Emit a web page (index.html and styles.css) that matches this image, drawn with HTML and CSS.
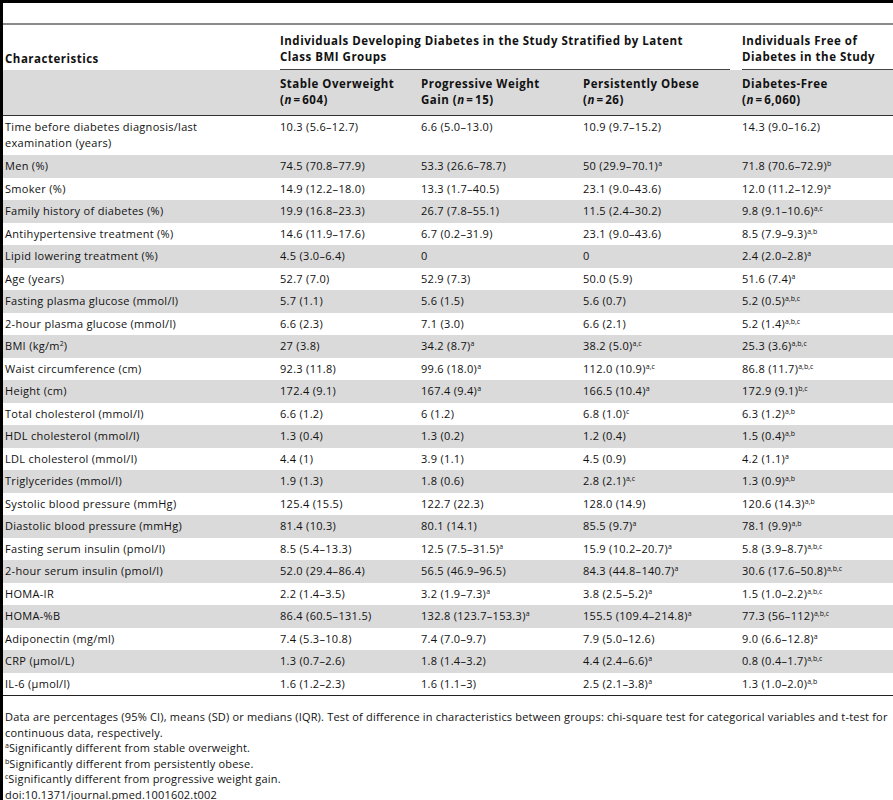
FILE: index.html
```html
<!DOCTYPE html>
<html lang="en">
<head>
<meta charset="utf-8">
<title>Table 2</title>
<link rel="stylesheet" href="styles.css">
</head>
<body>
<div class="page">
  <div class="top-rule"></div>
  <div class="caption-space"></div>
  <table class="data">
    <colgroup>
      <col class="c1"><col class="c2"><col class="c3"><col class="c4"><col class="c5">
    </colgroup>
    <thead>
      <tr class="group-row">
        <th class="char">Characteristics</th>
        <th class="group" colspan="3"><div class="group-inner">Individuals Developing Diabetes in the Study Stratified by Latent<br>Class BMI Groups</div></th>
        <th class="group last"><div class="group-inner">Individuals Free of<br>Diabetes in the Study</div></th>
      </tr>
      <tr class="sub-row">
        <th></th>
        <th>Stable Overweight<br>(<i>n</i>&#8202;=&#8202;604)</th>
        <th>Progressive Weight<br>Gain (<i>n</i>&#8202;=&#8202;15)</th>
        <th>Persistently Obese<br>(<i>n</i>&#8202;=&#8202;26)</th>
        <th>Diabetes-Free<br>(<i>n</i>&#8202;=&#8202;6,060)</th>
      </tr>
    </thead>
    <tbody>
      <tr class="first"><td>Time before diabetes diagnosis/last<br>examination (years)</td><td>10.3 (5.6–12.7)</td><td>6.6 (5.0–13.0)</td><td>10.9 (9.7–15.2)</td><td>14.3 (9.0–16.2)</td></tr>
      <tr class="alt"><td>Men (%)</td><td>74.5 (70.8–77.9)</td><td>53.3 (26.6–78.7)</td><td>50 (29.9–70.1)<sup>a</sup></td><td>71.8 (70.6–72.9)<sup>b</sup></td></tr>
      <tr><td>Smoker (%)</td><td>14.9 (12.2–18.0)</td><td>13.3 (1.7–40.5)</td><td>23.1 (9.0–43.6)</td><td>12.0 (11.2–12.9)<sup>a</sup></td></tr>
      <tr class="alt"><td>Family history of diabetes (%)</td><td>19.9 (16.8–23.3)</td><td>26.7 (7.8–55.1)</td><td>11.5 (2.4–30.2)</td><td>9.8 (9.1–10.6)<sup>a,c</sup></td></tr>
      <tr><td>Antihypertensive treatment (%)</td><td>14.6 (11.9–17.6)</td><td>6.7 (0.2–31.9)</td><td>23.1 (9.0–43.6)</td><td>8.5 (7.9–9.3)<sup>a,b</sup></td></tr>
      <tr class="alt"><td>Lipid lowering treatment (%)</td><td>4.5 (3.0–6.4)</td><td>0</td><td>0</td><td>2.4 (2.0–2.8)<sup>a</sup></td></tr>
      <tr><td>Age (years)</td><td>52.7 (7.0)</td><td>52.9 (7.3)</td><td>50.0 (5.9)</td><td>51.6 (7.4)<sup>a</sup></td></tr>
      <tr class="alt"><td>Fasting plasma glucose (mmol/l)</td><td>5.7 (1.1)</td><td>5.6 (1.5)</td><td>5.6 (0.7)</td><td>5.2 (0.5)<sup>a,b,c</sup></td></tr>
      <tr><td>2-hour plasma glucose (mmol/l)</td><td>6.6 (2.3)</td><td>7.1 (3.0)</td><td>6.6 (2.1)</td><td>5.2 (1.4)<sup>a,b,c</sup></td></tr>
      <tr class="alt"><td>BMI (kg/m<sup>2</sup>)</td><td>27 (3.8)</td><td>34.2 (8.7)<sup>a</sup></td><td>38.2 (5.0)<sup>a,c</sup></td><td>25.3 (3.6)<sup>a,b,c</sup></td></tr>
      <tr><td>Waist circumference (cm)</td><td>92.3 (11.8)</td><td>99.6 (18.0)<sup>a</sup></td><td>112.0 (10.9)<sup>a,c</sup></td><td>86.8 (11.7)<sup>a,b,c</sup></td></tr>
      <tr class="alt"><td>Height (cm)</td><td>172.4 (9.1)</td><td>167.4 (9.4)<sup>a</sup></td><td>166.5 (10.4)<sup>a</sup></td><td>172.9 (9.1)<sup>b,c</sup></td></tr>
      <tr><td>Total cholesterol (mmol/l)</td><td>6.6 (1.2)</td><td>6 (1.2)</td><td>6.8 (1.0)<sup>c</sup></td><td>6.3 (1.2)<sup>a,b</sup></td></tr>
      <tr class="alt"><td>HDL cholesterol (mmol/l)</td><td>1.3 (0.4)</td><td>1.3 (0.2)</td><td>1.2 (0.4)</td><td>1.5 (0.4)<sup>a,b</sup></td></tr>
      <tr><td>LDL cholesterol (mmol/l)</td><td>4.4 (1)</td><td>3.9 (1.1)</td><td>4.5 (0.9)</td><td>4.2 (1.1)<sup>a</sup></td></tr>
      <tr class="alt"><td>Triglycerides (mmol/l)</td><td>1.9 (1.3)</td><td>1.8 (0.6)</td><td>2.8 (2.1)<sup>a,c</sup></td><td>1.3 (0.9)<sup>a,b</sup></td></tr>
      <tr><td>Systolic blood pressure (mmHg)</td><td>125.4 (15.5)</td><td>122.7 (22.3)</td><td>128.0 (14.9)</td><td>120.6 (14.3)<sup>a,b</sup></td></tr>
      <tr class="alt"><td>Diastolic blood pressure (mmHg)</td><td>81.4 (10.3)</td><td>80.1 (14.1)</td><td>85.5 (9.7)<sup>a</sup></td><td>78.1 (9.9)<sup>a,b</sup></td></tr>
      <tr><td>Fasting serum insulin (pmol/l)</td><td>8.5 (5.4–13.3)</td><td>12.5 (7.5–31.5)<sup>a</sup></td><td>15.9 (10.2–20.7)<sup>a</sup></td><td>5.8 (3.9–8.7)<sup>a,b,c</sup></td></tr>
      <tr class="alt"><td>2-hour serum insulin (pmol/l)</td><td>52.0 (29.4–86.4)</td><td>56.5 (46.9–96.5)</td><td>84.3 (44.8–140.7)<sup>a</sup></td><td>30.6 (17.6–50.8)<sup>a,b,c</sup></td></tr>
      <tr><td>HOMA-IR</td><td>2.2 (1.4–3.5)</td><td>3.2 (1.9–7.3)<sup>a</sup></td><td>3.8 (2.5–5.2)<sup>a</sup></td><td>1.5 (1.0–2.2)<sup>a,b,c</sup></td></tr>
      <tr class="alt"><td>HOMA-%B</td><td>86.4 (60.5–131.5)</td><td>132.8 (123.7–153.3)<sup>a</sup></td><td>155.5 (109.4–214.8)<sup>a</sup></td><td>77.3 (56–112)<sup>a,b,c</sup></td></tr>
      <tr><td>Adiponectin (mg/ml)</td><td>7.4 (5.3–10.8)</td><td>7.4 (7.0–9.7)</td><td>7.9 (5.0–12.6)</td><td>9.0 (6.6–12.8)<sup>a</sup></td></tr>
      <tr class="alt"><td>CRP (µmol/L)</td><td>1.3 (0.7–2.6)</td><td>1.8 (1.4–3.2)</td><td>4.4 (2.4–6.6)<sup>a</sup></td><td>0.8 (0.4–1.7)<sup>a,b,c</sup></td></tr>
      <tr class="last-row"><td>IL-6 (µmol/l)</td><td>1.6 (1.2–2.3)</td><td>1.6 (1.1–3)</td><td>2.5 (2.1–3.8)<sup>a</sup></td><td>1.3 (1.0–2.0)<sup>a,b</sup></td></tr>
    </tbody>
  </table>
  <div class="notes">
    <p>Data are percentages (95% CI), means (SD) or medians (IQR). Test of difference in characteristics between groups: chi-square test for categorical variables and t-test for<br>continuous data, respectively.</p>
    <p><sup>a</sup>Significantly different from stable overweight.</p>
    <p><sup>b</sup>Significantly different from persistently obese.</p>
    <p><sup>c</sup>Significantly different from progressive weight gain.</p>
    <p>doi:10.1371/journal.pmed.1001602.t002</p>
  </div>
</div>
</body>
</html>
```

FILE: styles.css
```css
html, body {
  margin: 0;
  padding: 0;
  background: #fff;
}

body {
  font-family: "Open Sans", "Liberation Sans", sans-serif;
  font-size: 11px;
  line-height: 16px;
  color: #111;
}

.page {
  border-left: 3px solid #000;
  height: 800px;
  box-sizing: border-box;
  overflow: hidden;
}

.top-rule {
  height: 3px;
  background: #000;
}

.caption-space {
  height: 20px;
}

.data {
  border-collapse: collapse;
  table-layout: fixed;
  width: 910px;
  border-top: 2px solid #8a8a8a;
}

.c1 { width: 275px; }
.c2 { width: 141px; }
.c3 { width: 162px; }
.c4 { width: 159px; }
.c5 { width: 173px; }

.data th,
.data td {
  text-align: left;
  vertical-align: top;
  padding: 3.25px 2px;
  white-space: nowrap;
  font-weight: normal;
  letter-spacing: 0.3px;
}

.data th {
  font-weight: bold;
  font-size: 11.5px;
  letter-spacing: 0.5px;
}

.group-row th {
  vertical-align: bottom;
  padding: 1px 0 0 2px;
}

.group-row .char {
  padding-bottom: 3px;
}

.group-row .group {
  padding-right: 10px;
}

.group-row .group.last {
  padding-right: 0;
}

.group-inner {
  border-bottom: 1px solid #444;
  padding: 7px 0 4px;
}

.sub-row th {
  background: #dadada;
  padding: 6px 2px 7px;
  border-bottom: 1px solid #333;
}

.data tbody tr.first td {
  padding-top: 3px;
  padding-bottom: 4px;
}

.data tbody tr.alt td {
  background: #dadada;
}

.data tbody tr.last-row td {
  border-bottom: 1px solid #222;
}

.data sup {
  font-size: 7px;
  line-height: 0;
  vertical-align: 4px;
  letter-spacing: 0;
}

.notes {
  padding: 13px 0 0 2px;
  letter-spacing: 0.18px;
  line-height: 15.6px;
}

.notes p {
  margin: 0;
  white-space: nowrap;
}

.notes sup {
  font-size: 7px;
  line-height: 0;
  vertical-align: 4px;
  letter-spacing: 0;
}
```
